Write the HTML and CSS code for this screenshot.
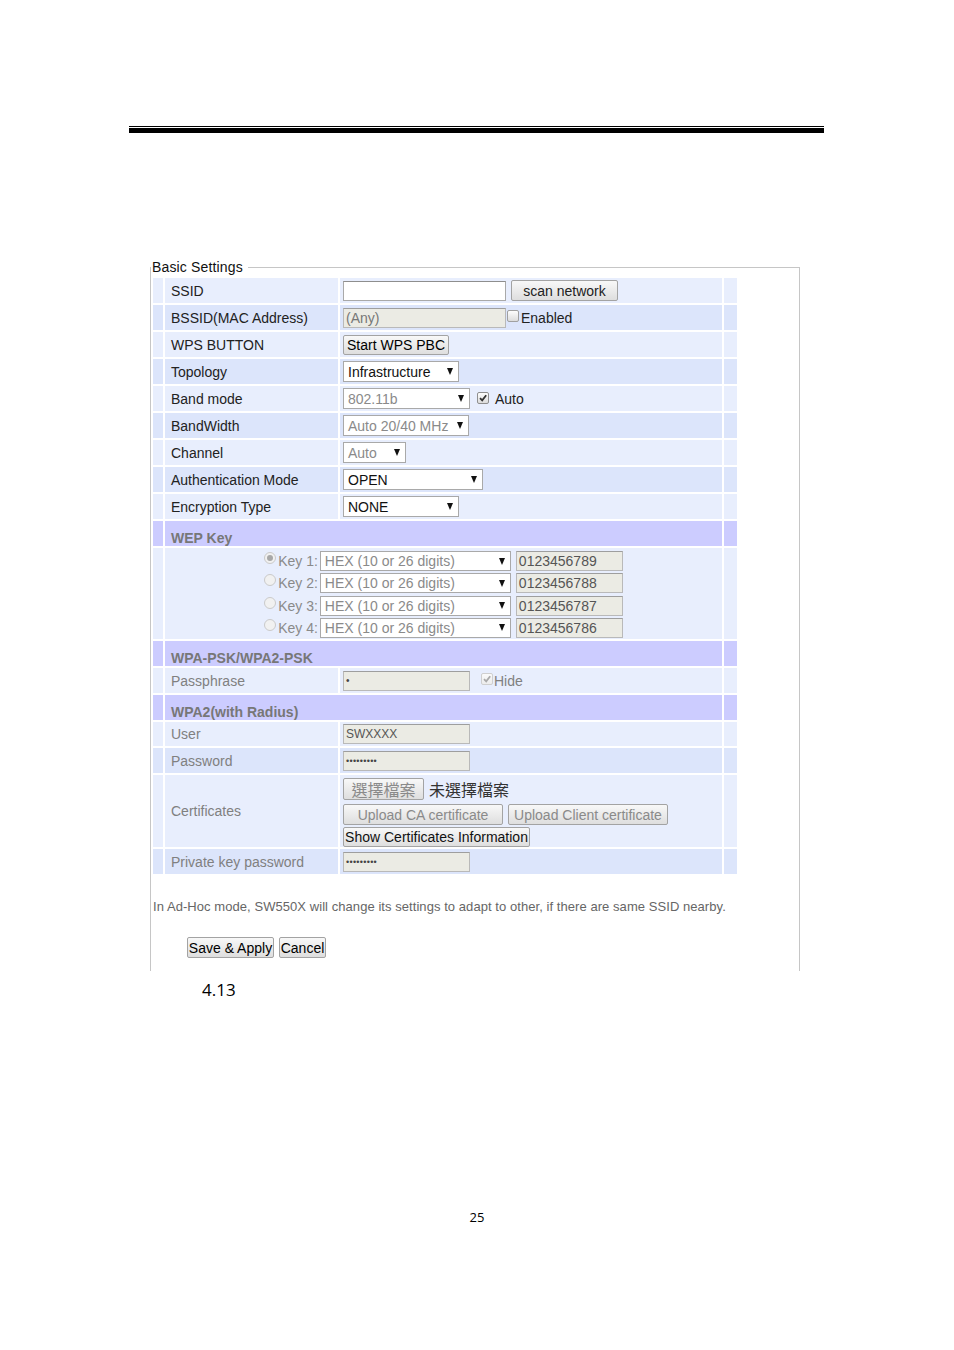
FILE: index.html
```html
<!DOCTYPE html>
<html>
<head>
<meta charset="utf-8">
<link rel="stylesheet" href="styles.css">
</head>
<body>
<div class="rule-thin"></div>
<div class="rule-thick"></div>

<fieldset class="box">
  <legend>Basic Settings</legend>
  <table class="grid">
    <colgroup><col class="c1"><col class="c2"><col class="c3"><col class="c4"></colgroup>
    <tr class="l"><td></td><td class="lab">SSID</td><td class="val"><div class="f"><span class="txt w163"></span><span class="btn scan">scan network</span></div></td><td></td></tr>
    <tr class="d"><td></td><td class="lab">BSSID(MAC Address)</td><td class="val"><div class="f"><span class="txt dis w163">(Any)</span><span class="cb up"></span><span class="cbt">Enabled</span></div></td><td></td></tr>
    <tr class="l"><td></td><td class="lab">WPS BUTTON</td><td class="val"><div class="f"><span class="btn wps">Start WPS PBC</span></div></td><td></td></tr>
    <tr class="d"><td></td><td class="lab">Topology</td><td class="val"><div class="f"><span class="sel w116"><span>Infrastructure</span><i class="ar"></i></span></div></td><td></td></tr>
    <tr class="l"><td></td><td class="lab">Band mode</td><td class="val"><div class="f"><span class="sel g w127"><span>802.11b</span><i class="ar"></i></span><span class="cb on auto"><svg viewBox="0 0 10 10" width="10" height="10"><path d="M2 5.2 L4.2 7.4 L8.2 2.2" fill="none" stroke="#333" stroke-width="1.8"/></svg></span><span class="cbt at">Auto</span></div></td><td></td></tr>
    <tr class="d"><td></td><td class="lab">BandWidth</td><td class="val"><div class="f"><span class="sel g w126"><span>Auto 20/40 MHz</span><i class="ar"></i></span></div></td><td></td></tr>
    <tr class="l"><td></td><td class="lab">Channel</td><td class="val"><div class="f"><span class="sel g w63"><span>Auto</span><i class="ar"></i></span></div></td><td></td></tr>
    <tr class="d"><td></td><td class="lab">Authentication Mode</td><td class="val"><div class="f"><span class="sel w140"><span>OPEN</span><i class="ar"></i></span></div></td><td></td></tr>
    <tr class="l"><td></td><td class="lab">Encryption Type</td><td class="val"><div class="f"><span class="sel w116"><span>NONE</span><i class="ar"></i></span></div></td><td></td></tr>

    <tr class="h"><td></td><td colspan="2" class="hd">WEP Key</td><td></td></tr>
    <tr class="l"><td class="tall"></td><td colspan="2" class="keys-cell">
      <div class="keys">
        <div class="kline"><span class="rd on"></span><span class="kt">Key 1:</span><span class="sel g w191"><span>HEX (10 or 26 digits)</span><i class="ar"></i></span><span class="txt dis kv">0123456789</span></div>
        <div class="kline"><span class="rd"></span><span class="kt">Key 2:</span><span class="sel g w191"><span>HEX (10 or 26 digits)</span><i class="ar"></i></span><span class="txt dis kv">0123456788</span></div>
        <div class="kline"><span class="rd"></span><span class="kt">Key 3:</span><span class="sel g w191"><span>HEX (10 or 26 digits)</span><i class="ar"></i></span><span class="txt dis kv">0123456787</span></div>
        <div class="kline"><span class="rd"></span><span class="kt">Key 4:</span><span class="sel g w191"><span>HEX (10 or 26 digits)</span><i class="ar"></i></span><span class="txt dis kv">0123456786</span></div>
      </div>
    </td><td></td></tr>

    <tr class="h"><td></td><td colspan="2" class="hd">WPA-PSK/WPA2-PSK</td><td></td></tr>
    <tr class="l"><td></td><td class="lab gray">Passphrase</td><td class="val"><div class="f"><span class="txt dis w127 dot1">•</span><span class="cb on dim hide"><svg viewBox="0 0 10 10" width="10" height="10"><path d="M2 5.2 L4.2 7.4 L8.2 2.2" fill="none" stroke="#aaa" stroke-width="1.8"/></svg></span><span class="cbt gray">Hide</span></div></td><td></td></tr>

    <tr class="h"><td></td><td colspan="2" class="hd">WPA2(with Radius)</td><td></td></tr>
    <tr class="l r24"><td></td><td class="lab gray">User</td><td class="val"><div class="f"><span class="txt dis w127 sm">SWXXXX</span></div></td><td></td></tr>
    <tr class="d"><td></td><td class="lab gray">Password</td><td class="val"><div class="f"><span class="txt dis w127 dots">•••••••••</span></div></td><td></td></tr>
    <tr class="l"><td class="cert-h"></td><td class="lab gray">Certificates</td><td class="val cert-cell">
      <div class="cert">
        <div class="f"><span class="btn dimt file">選擇檔案</span><span class="nofile">未選擇檔案</span></div>
        <div class="f up-row"><span class="btn dimt upl">Upload CA certificate</span><span class="btn dimt upl up2">Upload Client certificate</span></div>
        <div class="f show-row"><span class="btn show">Show Certificates Information</span></div>
      </div>
    </td><td></td></tr>
    <tr class="d"><td></td><td class="lab gray">Private key password</td><td class="val"><div class="f"><span class="txt dis w127 dots">•••••••••</span></div></td><td></td></tr>
  </table>

  <p class="note">In Ad-Hoc mode, SW550X will change its settings to adapt to other, if there are same SSID nearby.</p>

  <div class="actions"><span class="btn save">Save &amp; Apply</span><span class="btn cancel">Cancel</span></div>
</fieldset>

<div class="fig">4.13</div>
<div class="pg">25</div>
</body>
</html>
```

FILE: styles.css
```css
* { box-sizing: border-box; }
body {
  margin: 0;
  background: #fff;
  font-family: "Liberation Sans", Arial, sans-serif;
  color: #222;
  width: 954px;
}
.rule-thin { margin: 126px 0 0 129px; width: 695px; height: 1px; background: #000; }
.rule-thick { margin: 1px 0 0 129px; width: 695px; height: 5px; background: #000; }

.box {
  margin: 126px 0 0 150px;
  width: 650px;
  padding: 0 0 13px 0;
  border: 1px solid #c6c6c6;
  border-bottom: none;
  min-inline-size: 0;
}
.box legend {
  font-size: 14px;
  line-height: 16px;
  padding: 0 5px 0 1px;
  color: #111;
  letter-spacing: 0.15px;
}

.grid {
  border-collapse: separate;
  border-spacing: 2px;
  table-layout: fixed;
  width: 588px;
  margin-top: 1px;
  font-size: 14px;
}
.c1 { width: 10px; }
.c2 { width: 173px; }
.c3 { width: 382px; }
.c4 { width: 13px; }
.grid td { padding: 0; height: 25px; vertical-align: middle; }
.grid tr.r24 td { height: 24px; }
tr.l td { background: #e8eefd; }
tr.d td { background: #dce5fb; }
tr.h td { background: #ccccff; }

.lab { padding-left: 6px !important; color: #222; white-space: nowrap; }
.lab.gray { color: #808080; }
.val { padding-left: 3px !important; }
.grid td.hd {
  font-weight: bold; color: #777;
  padding: 9px 0 0 6px;
  line-height: 16px;
  vertical-align: top;
}

.f { display: flex; align-items: center; }

.txt {
  display: inline-flex; align-items: center;
  height: 20px;
  border: 1px solid #a9a9a9;
  border-top-color: #8e8e8e;
  background: #fff;
  padding: 0 2px;
  font-size: 14px;
  color: #777;
  white-space: nowrap;
  overflow: hidden;
}
.txt.dis { background: #ebebe4; border-color: #b9b9b9; border-top-color: #9e9e9e; }
.w163 { width: 163px; }
.w127 { width: 127px; }
.sm { font-size: 12px; color: #555; }
.dots { font-size: 9px; color: #444; letter-spacing: 0.3px; }
.dot1 { font-size: 10px; color: #444; }

.btn {
  display: inline-flex; align-items: center; justify-content: center;
  height: 21px;
  border: 1px solid #a3a3a3;
  border-radius: 2px;
  background: linear-gradient(#f8f8f8, #dedede);
  font-size: 14px;
  color: #000;
  padding: 0 2px;
  white-space: nowrap;
}
.btn.dimt { color: #8a8a8a; }
.scan { width: 107px; margin-left: 5px; color: #222; }
.wps { width: 106px; height: 20px; }
.file { width: 81px; height: 22px; font-family: "Noto Sans CJK TC", "Liberation Sans", sans-serif; font-size: 16px; }
.nofile { margin-left: 5px; font-family: "Noto Sans CJK TC", "Liberation Sans", sans-serif; font-size: 16px; color: #333; }
.upl { width: 160px; }
.up2 { margin-left: 5px; }
.show { width: 187px; height: 20px; color: #111; }
.save { width: 87px; }
.cancel { width: 47px; margin-left: 5px; }

.sel {
  display: inline-flex; align-items: center; justify-content: space-between;
  height: 21px;
  border: 1px solid #a9a9a9;
  background: #fff;
  padding: 0 5px 0 4px;
  font-size: 14px;
  color: #111;
  white-space: nowrap;
}
.sel.g { color: #8a8a8a; }
.w116 { width: 116px; }
.w126 { width: 126px; }
.w63 { width: 63px; }
.w140 { width: 140px; }
.w191 { width: 191px; height: 20px; }
.ar {
  display: inline-block; width: 0; height: 0;
  border-left: 3px solid transparent;
  border-right: 3px solid transparent;
  border-top: 7px solid #111;
}

.cb {
  display: inline-flex; align-items: center; justify-content: center;
  width: 12px; height: 12px;
  border: 1px solid #8f8f8f;
  border-radius: 2px;
  background: linear-gradient(#fdfdfd, #dcdcdc);
}
.cb.up { margin-top: -3px; margin-left: 1px; border-color: #a0a0a0; }
.cb.dim { border-color: #cfcfcf; background: linear-gradient(#fafafa, #ececec); }
.cb.auto { margin-left: 7px; margin-top: -2px; }
.cb.hide { margin-left: 11px; margin-top: -3px; }
.cbt { margin-left: 2px; font-size: 14px; color: #222; }
.cbt.at { margin-left: 6px; }
.cbt.gray { margin-left: 1px; color: #808080; }

.keys-cell { height: 91px !important; vertical-align: top !important; }
.tall { height: 91px !important; }
.keys { display: flex; flex-direction: column; align-items: center; padding-top: 2px; }
.kline { display: flex; align-items: center; height: 20px; margin: 1px 0 1.3px; }
.rd {
  width: 12px; height: 12px; border-radius: 50%;
  border: 1px solid #cacaca;
  background: #f1f1f1;
  margin-top: -6px;
  display: inline-flex; align-items: center; justify-content: center;
}
.rd.on::after { content: ""; width: 6px; height: 6px; border-radius: 50%; background: #a8a8a8; }
.kt { margin: 0 2px 0 2px; font-size: 14px; color: #8a8a8a; }
.kv { width: 107px; margin-left: 5px; color: #555; }

.cert-cell { vertical-align: top !important; height: 71px !important; }
.cert-h { height: 71px !important; }
.cert { padding-top: 2px; }
.up-row { margin-top: 3px; }
.show-row { margin-top: 2px; }

.note {
  margin: 23px 0 0 2px;
  font-size: 13px;
  line-height: 15px;
  color: #666;
  letter-spacing: 0.06px;
}
.actions { display: flex; margin: 23px 0 0 36px; }

.fig {
  margin: 7px 0 0 202px;
  font-family: "Open Sans", sans-serif;
  font-size: 17px;
  line-height: 23px;
  color: #000;
}
.pg {
  margin-top: 207px;
  text-align: center;
  font-family: "Open Sans", sans-serif;
  font-size: 13px;
  line-height: 18px;
  color: #000;
}
```
